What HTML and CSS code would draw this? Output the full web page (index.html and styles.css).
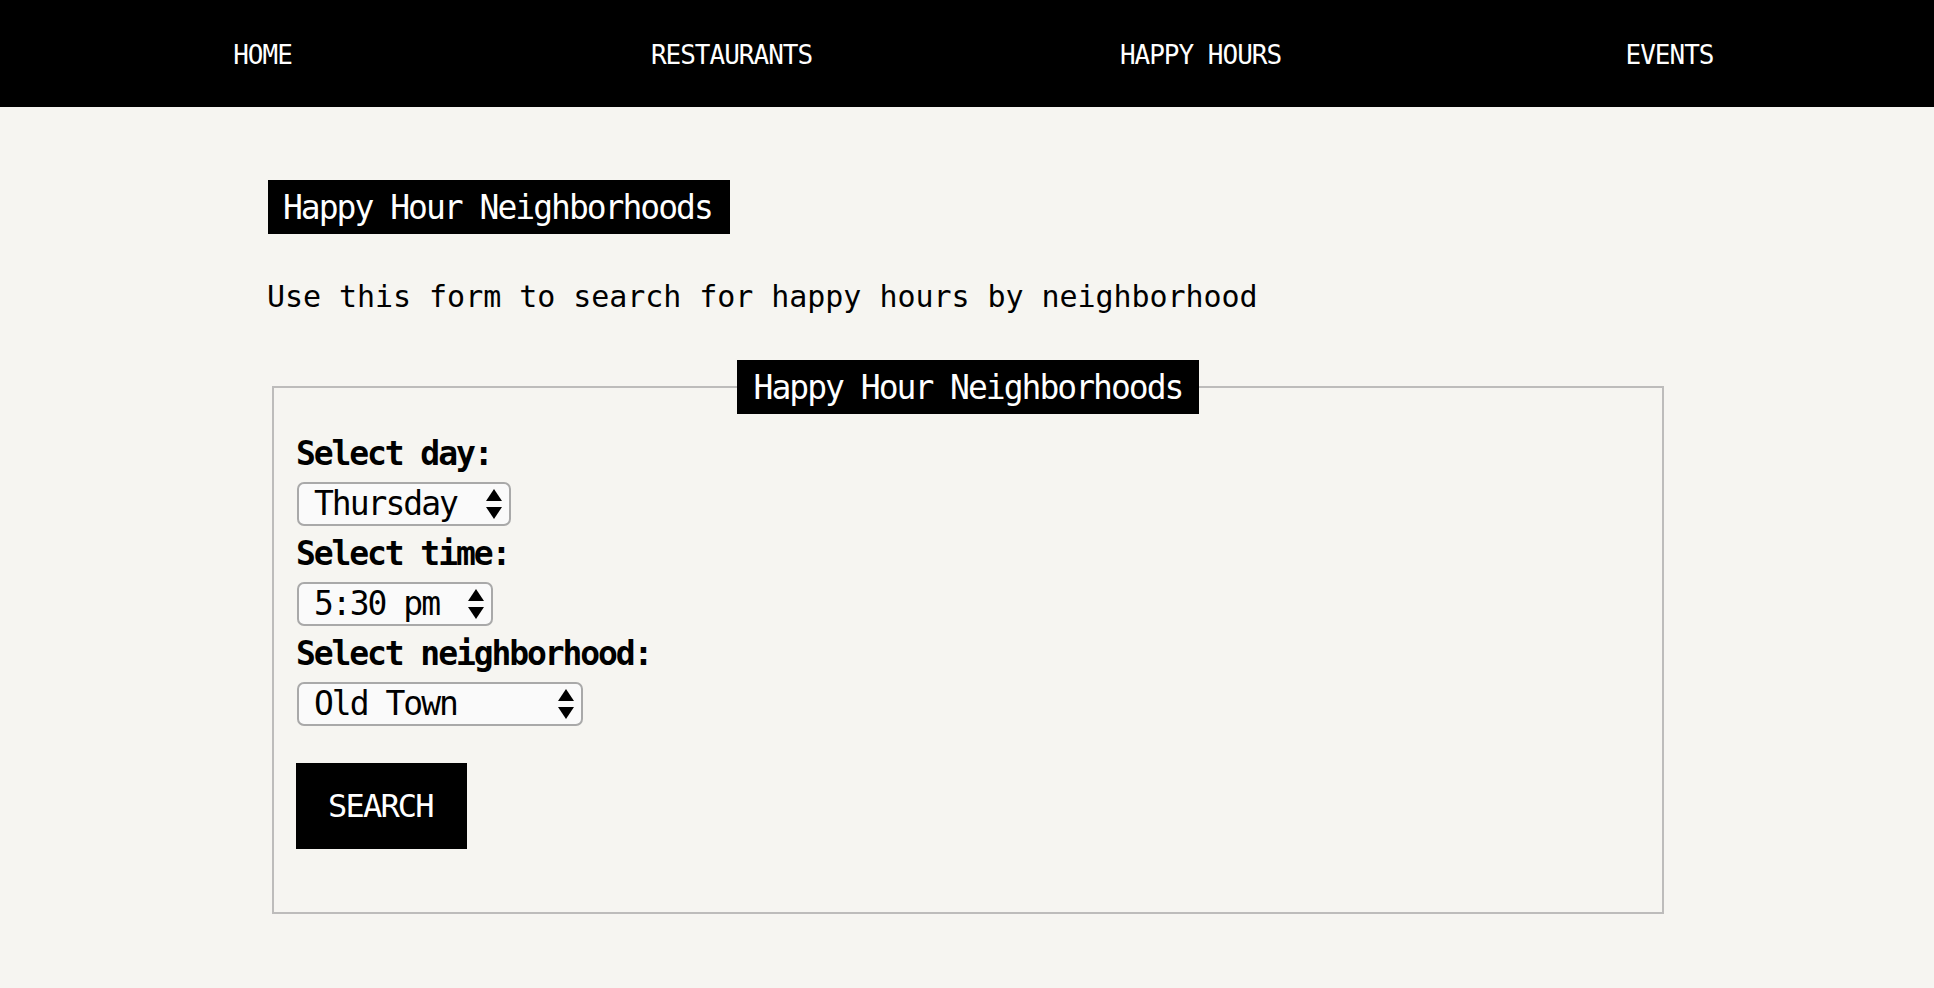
FILE: index.html
```html
<!DOCTYPE html>
<html lang="en">
<head>
<meta charset="utf-8">
<title>Happy Hour Neighborhoods</title>
<link rel="stylesheet" href="styles.css">
</head>
<body>
<nav class="topnav">
  <ul class="nav-list">
    <li class="nav-item"><a href="#" class="nav-link">HOME</a></li>
    <li class="nav-item"><a href="#" class="nav-link">RESTAURANTS</a></li>
    <li class="nav-item"><a href="#" class="nav-link">HAPPY HOURS</a></li>
    <li class="nav-item"><a href="#" class="nav-link">EVENTS</a></li>
  </ul>
</nav>
<main class="content">
  <h1 class="page-title">Happy Hour Neighborhoods</h1>
  <p class="intro">Use this form to search for happy hours by neighborhood</p>
  <form class="search-form">
    <fieldset class="search-fieldset">
      <legend class="search-legend">Happy Hour Neighborhoods</legend>
      <label class="field-label" for="day">Select day:</label>
      <span class="select-wrap sel-day">
        <select id="day" class="field-select">
          <option>Monday</option><option>Tuesday</option><option>Wednesday</option>
          <option selected>Thursday</option><option>Friday</option><option>Saturday</option><option>Sunday</option>
        </select>
        <svg class="select-arrows" width="16" height="30" viewBox="0 0 16 30"><polygon points="8,0 16,12 0,12"/><polygon points="0,18 16,18 8,30"/></svg>
      </span>
      <label class="field-label" for="time">Select time:</label>
      <span class="select-wrap sel-time">
        <select id="time" class="field-select">
          <option>4:00 pm</option><option>4:30 pm</option><option>5:00 pm</option>
          <option selected>5:30 pm</option><option>6:00 pm</option><option>6:30 pm</option>
        </select>
        <svg class="select-arrows" width="16" height="30" viewBox="0 0 16 30"><polygon points="8,0 16,12 0,12"/><polygon points="0,18 16,18 8,30"/></svg>
      </span>
      <label class="field-label" for="hood">Select neighborhood:</label>
      <span class="select-wrap sel-hood">
        <select id="hood" class="field-select">
          <option selected>Old Town</option><option>Downtown</option><option>Pearl District</option>
        </select>
        <svg class="select-arrows" width="16" height="30" viewBox="0 0 16 30"><polygon points="8,0 16,12 0,12"/><polygon points="0,18 16,18 8,30"/></svg>
      </span>
      <button type="submit" class="search-btn">SEARCH</button>
    </fieldset>
  </form>
</main>
</body>
</html>
```
FILE: styles.css
```css
* { box-sizing: border-box; }

body {
  margin: 0;
  background: #f6f5f1;
  color: #000;
  font-family: "DejaVu Sans Mono", "Liberation Mono", monospace;
}

.topnav {
  background: #000;
  height: 107px;
}

.nav-list {
  list-style: none;
  margin: 0;
  padding: 0 29px;
  display: flex;
  height: 100%;
}

.nav-item {
  flex: 1 1 0;
  display: flex;
  align-items: center;
  justify-content: center;
}

.nav-link {
  color: #fff;
  text-decoration: none;
  font-size: 26px;
  letter-spacing: -1px;
  padding-top: 2px;
  margin-left: -2px;
}

.content {
  width: 1398px;
  margin: 0 auto;
  padding-top: 73px;
}

.page-title {
  display: inline-block;
  margin: 0;
  background: #000;
  color: #fff;
  font-weight: normal;
  font-size: 33px;
  letter-spacing: -2px;
  line-height: 52px;
  padding: 2px 18px 0 15px;
}

.intro {
  margin: 45px 0 46px;
  font-size: 30px;
  letter-spacing: -0.05px;
  line-height: 35px;
  margin-left: -1px;
}

.search-form { margin: 0; }

.search-fieldset {
  margin: 0 2px 0 4px;
  border: 2px solid #bdbcbb;
  padding: 12px 23px 63px;
  min-width: 0;
}

.search-legend {
  margin: 0 auto;
  background: #000;
  color: #fff;
  font-size: 33px;
  letter-spacing: -2px;
  line-height: 52px;
  padding: 2px 17px 0;
}

.field-label {
  display: block;
  font-weight: bold;
  font-size: 33px;
  letter-spacing: -2.1px;
  line-height: 56px;
  margin-left: -1px;
}

.select-wrap {
  position: relative;
  display: block;
}

.sel-day { width: 214px; }
.sel-time { width: 196px; }
.sel-hood { width: 286px; }

.field-select {
  appearance: none;
  -webkit-appearance: none;
  display: block;
  width: 100%;
  height: 44px;
  margin: 0;
  border: 2px solid #a9a9a9;
  border-radius: 7px;
  background: #fafafa;
  color: #000;
  font-family: "DejaVu Sans Mono", "Liberation Mono", monospace;
  font-size: 33px;
  letter-spacing: -2px;
  line-height: 40px;
  padding: 0 0 0 15px;
}

.select-arrows {
  position: absolute;
  right: 9px;
  top: 7px;
  fill: #000;
  pointer-events: none;
}

.search-btn {
  display: block;
  margin-top: 37px;
  height: 86px;
  padding: 0 34px 0 32px;
  border: 0;
  background: #000;
  color: #fff;
  font-family: "DejaVu Sans Mono", "Liberation Mono", monospace;
  font-size: 32px;
  letter-spacing: -1.8px;
  line-height: 86px;
  margin-left: -1px;
}
```
